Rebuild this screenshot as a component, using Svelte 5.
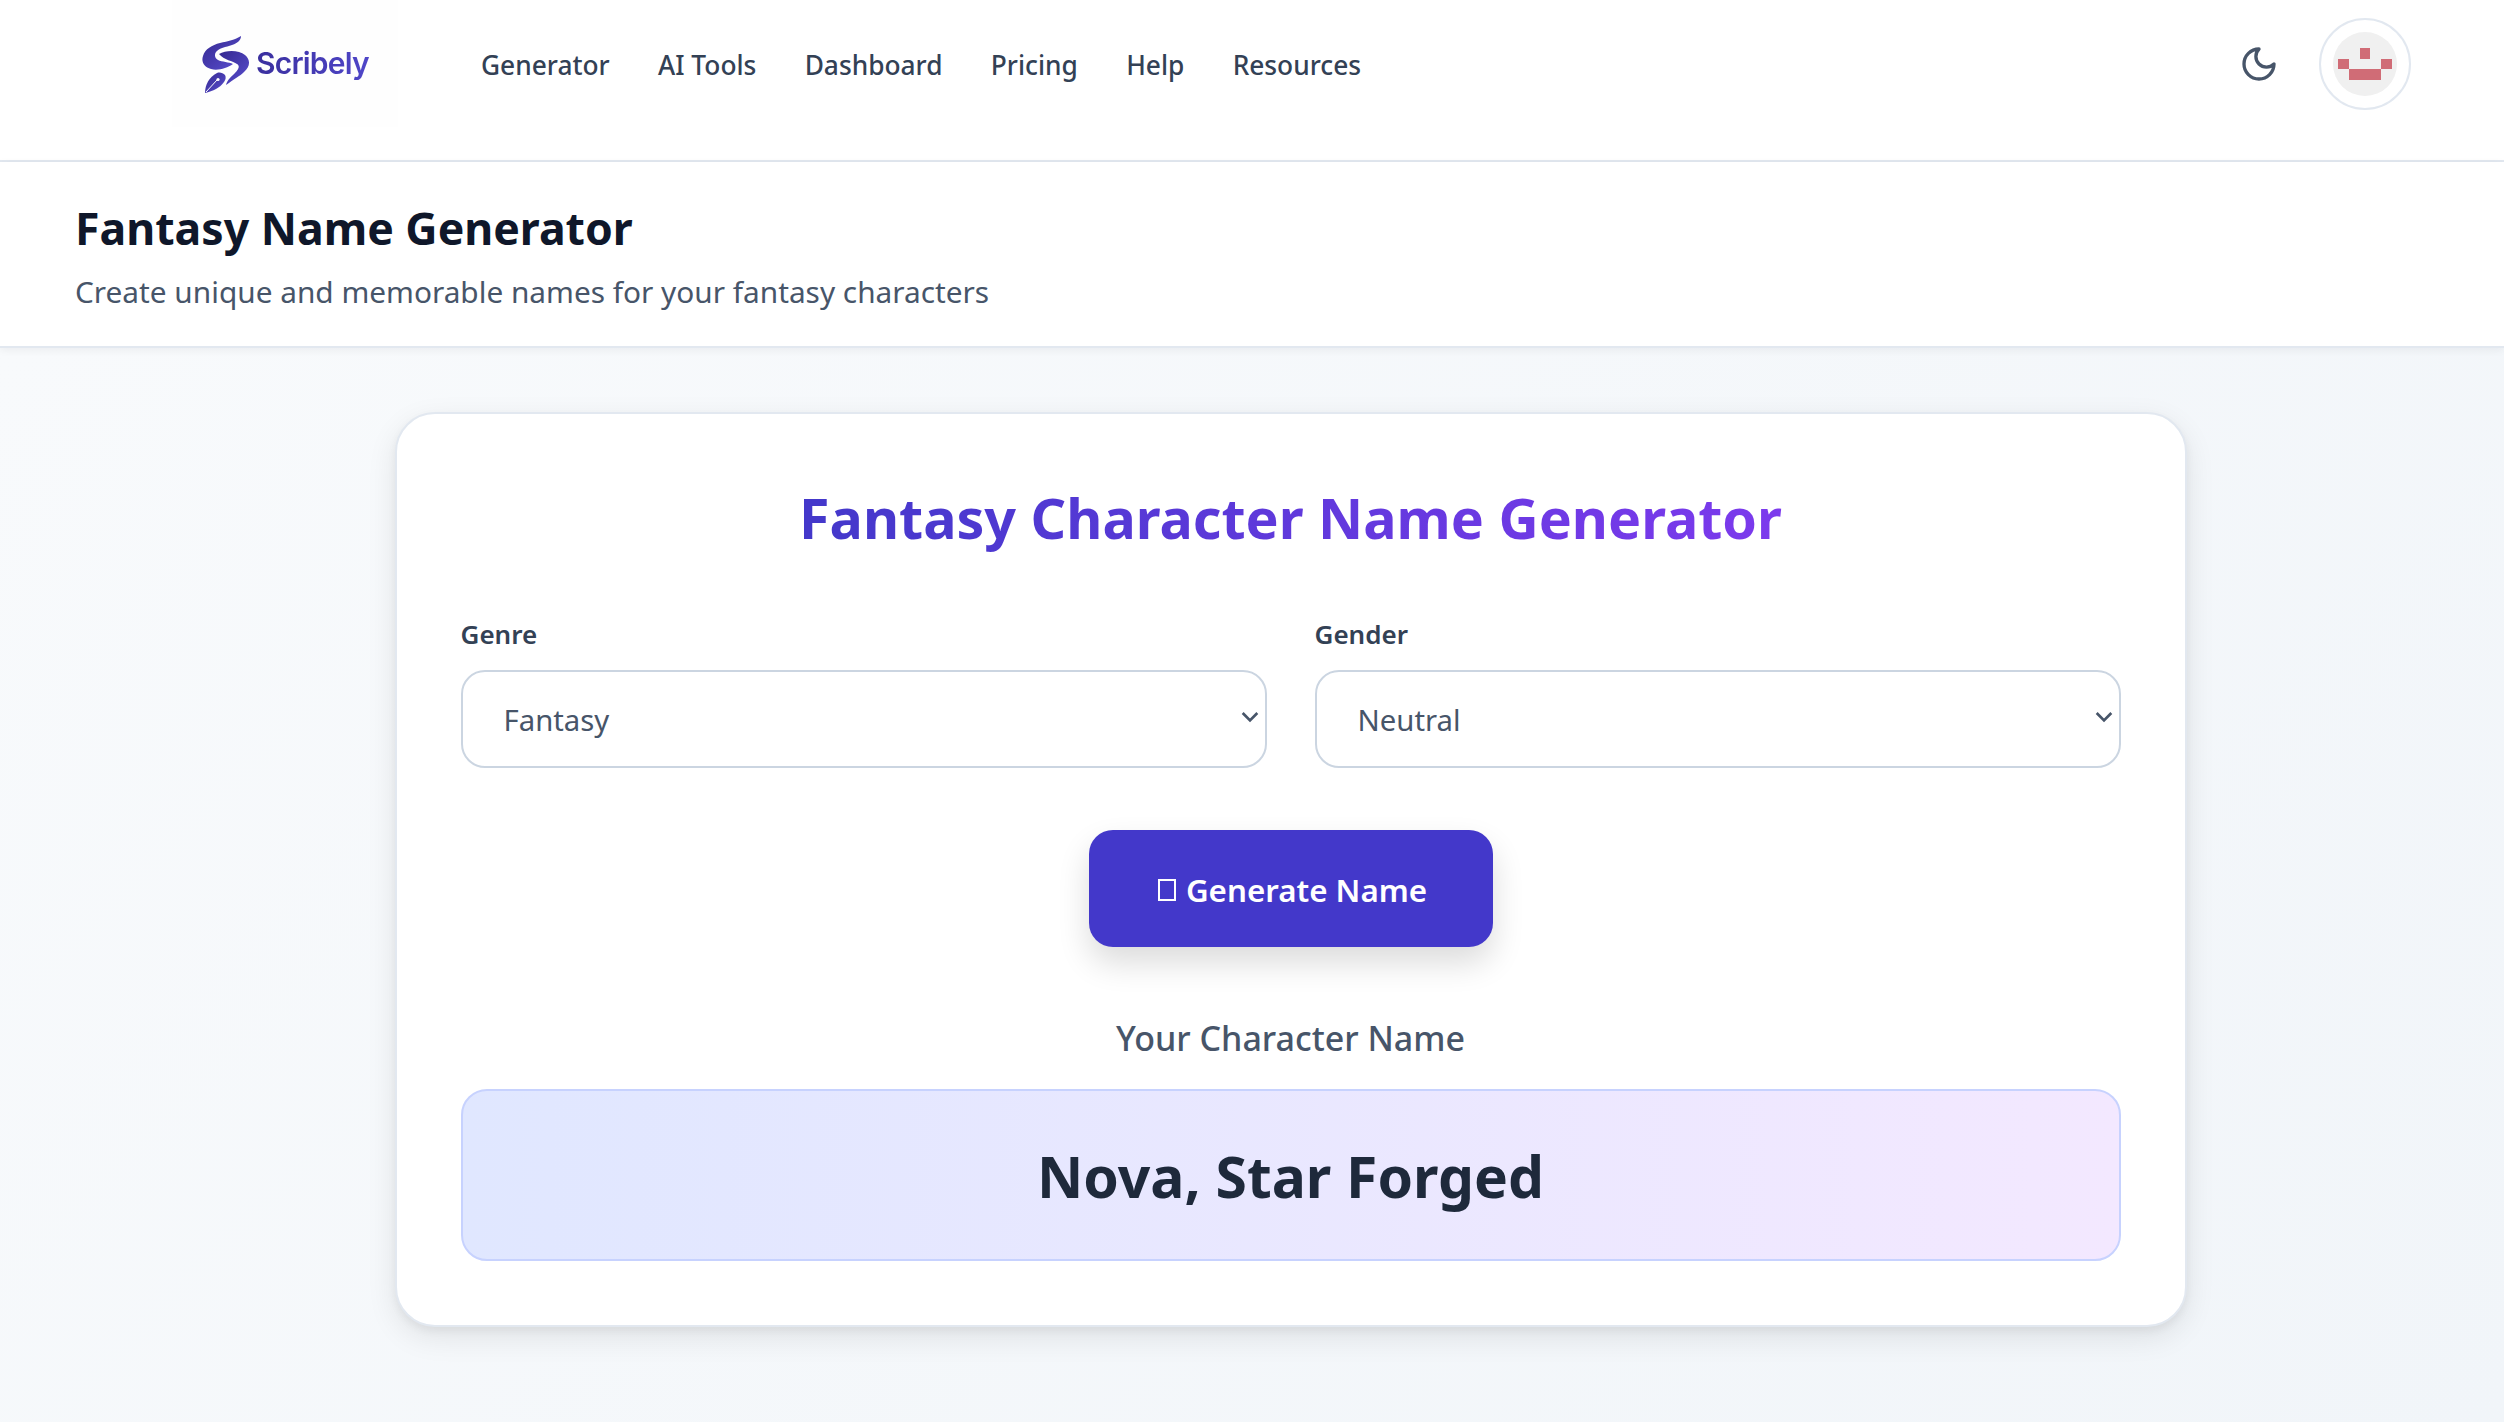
<script>
  const genres = ['Fantasy', 'Sci-Fi', 'Historical'];
  const genders = ['Neutral', 'Male', 'Female'];
  const navItems = ['Generator', 'AI Tools', 'Dashboard', 'Pricing', 'Help', 'Resources'];
  const pixels = [[5, 3, 2, 2], [1, 5, 2, 2], [9, 5, 2, 2], [3, 7, 6, 2]];
</script>

<header class="topbar">
  <div class="logo">
    <svg class="logo-mark" viewBox="0 0 48 58" aria-hidden="true">
      <defs>
        <linearGradient id="lg" x1="0" y1="0" x2="1" y2="1">
          <stop offset="0" stop-color="#34288f" />
          <stop offset="1" stop-color="#5a4fd0" />
        </linearGradient>
      </defs>
      <path fill="url(#lg)" d="M39 1 C39 5 36 8 30 10 C24 12 17 13 14 17 C12 20 13 23 16 25 C20 27 27 27 31 29 C25 33 16 36 9 34 C2 32 -1 27 1 21 C3 14 10 10 18 8 C26 6 33 5 39 1 Z" />
      <path fill="url(#lg)" d="M17 19 C24 15 37 15 43 20 C49 25 48 32 42 37 C38 41 32 44 24 50 C25 45 30 41 33 38 C37 34 38 31 35 29 C31 26 22 25 17 19 Z" />
      <path fill="url(#lg)" d="M3 58 C3 50 7 42 15 38 C18 37 21 38 23 40 C24 42 24 44 22 47 C18 53 11 56 3 58 Z" />
      <path stroke="#fff" stroke-width="1" fill="none" d="M4 57 L15 45" />
      <circle cx="16" cy="44.500" r="1.600" fill="#fff" />
    </svg>
    <span class="logo-text">Scribely</span>
  </div>

  <nav class="nav">
    {#each navItems as item}
      <a href="#top" class="nav-link">{item}</a>
    {/each}
  </nav>

  <div class="actions">
    <button class="theme" aria-label="Toggle theme">
      <svg viewBox="0 0 24 24" class="moon" aria-hidden="true">
        <path d="M12 3a6 6 0 0 0 9 9 9 9 0 1 1-9-9Z" />
      </svg>
    </button>
    <div class="avatar">
      <svg viewBox="0 0 12 12" class="identicon" aria-hidden="true" shape-rendering="crispEdges">
        <rect width="12" height="12" fill="#f0f0f0" />
        {#each pixels as p}
          <rect x={p[0]} y={p[1]} width={p[2]} height={p[3]} fill="#d06c76" />
        {/each}
      </svg>
    </div>
  </div>
</header>

<section class="pagehead">
  <h1>Fantasy Name Generator</h1>
  <p>Create unique and memorable names for your fantasy characters</p>
</section>

<main class="main">
  <div class="card">
    <h2>Fantasy Character Name Generator</h2>

    <div class="fields">
      <label class="field">
        <span class="field-label">Genre</span>
        <span class="select-wrap">
          <select>
            {#each genres as g}<option>{g}</option>{/each}
          </select>
          <svg class="chev" viewBox="0 0 16 10" aria-hidden="true"><path d="M1.5 1.5 8 8l6.5-6.5" /></svg>
        </span>
      </label>
      <label class="field">
        <span class="field-label">Gender</span>
        <span class="select-wrap">
          <select>
            {#each genders as g}<option>{g}</option>{/each}
          </select>
          <svg class="chev" viewBox="0 0 16 10" aria-hidden="true"><path d="M1.5 1.5 8 8l6.5-6.5" /></svg>
        </span>
      </label>
    </div>

    <div class="btn-row">
      <button class="generate"><span class="tofu"></span>Generate Name</button>
    </div>

    <h3>Your Character Name</h3>
    <div class="result">Nova, Star Forged</div>
  </div>
</main>

<style>
  :global(body) {
    margin: 0;
    background: #f8fafc;
    font-family: "Noto Sans", "Open Sans", sans-serif;
    color: #0f172a;
  }

  .topbar {
    display: flex;
    align-items: center;
    height: 130px;
    background: #fff;
    border-bottom: 2px solid #e2e8f0;
    padding: 0 93px 30px 172px;
  }

  .logo {
    align-self: flex-start;
    width: 226px;
    height: 127px;
    background: #fefefe;
    display: flex;
    align-items: center;
    gap: 6px;
    padding-left: 30px;
    box-sizing: border-box;
    flex: none;
  }

  .logo-mark {
    width: 48px;
    height: 58px;
    flex: none;
  }

  .logo-text {
    font-family: Inter, sans-serif;
    font-weight: 600;
    font-size: 30px;
    letter-spacing: -0.8px;
    background: linear-gradient(90deg, #3a2f9e, #4f46c8);
    -webkit-background-clip: text;
    background-clip: text;
    color: transparent;
    margin-top: -2px;
  }

  .nav {
    display: flex;
    gap: 48.300px;
    margin-left: 83px;
    flex: 1;
  }

  .nav-link {
    font-size: 26.300px;
    font-weight: 500;
    color: #334155;
    text-decoration: none;
  }

  .actions {
    display: flex;
    align-items: center;
    gap: 40px;
  }

  .theme {
    background: none;
    border: 0;
    padding: 0;
    display: flex;
    margin-top: -2px;
  }

  .moon {
    width: 40px;
    height: 40px;
    fill: none;
    stroke: #475569;
    stroke-width: 2;
    stroke-linejoin: round;
    stroke-linecap: round;
  }

  .avatar {
    width: 92px;
    height: 92px;
    border: 2px solid #e2e8f0;
    border-radius: 50%;
    box-sizing: border-box;
    display: flex;
    align-items: center;
    justify-content: center;
    margin-top: -2px;
  }

  .identicon {
    width: 64px;
    height: 64px;
    border-radius: 50%;
  }

  .pagehead {
    background: #fff;
    padding: 34px 75px 0;
    height: 186px;
    box-sizing: border-box;
    border-bottom: 2px solid #e2e8f0;
    box-shadow: 0 2px 8px rgba(15, 23, 42, 0.06);
    position: relative;
  }

  h1 {
    margin: 0;
    font-size: 44.600px;
    line-height: 64px;
    font-weight: 700;
    color: #0f172a;
  }

  .pagehead p {
    margin: 10px 0 0;
    font-size: 29.800px;
    line-height: 44px;
    color: #475569;
  }

  .main {
    background: linear-gradient(135deg, #f8fafc, #f1f5f9);
    padding: 64px 0 95px 77px;
    display: flex;
    justify-content: center;
  }

  .card {
    width: 1792px;
    height: 915px;
    box-sizing: border-box;
    background: #fff;
    border: 2px solid #e2e8f0;
    border-radius: 40px;
    padding: 64px;
    box-shadow: 0 10px 30px rgba(0, 0, 0, 0.09), 0 4px 8px rgba(0, 0, 0, 0.05);
    display: flex;
    flex-direction: column;
  }

  h2 {
    margin: 0;
    align-self: center;
    font-size: 55.600px;
    line-height: 80px;
    font-weight: 700;
    background: linear-gradient(90deg, #4338ca, #7c3aed);
    -webkit-background-clip: text;
    background-clip: text;
    color: transparent;
  }

  .fields {
    display: grid;
    grid-template-columns: 1fr 1fr;
    gap: 48px;
    margin-top: 58px;
  }

  .field {
    display: flex;
    flex-direction: column;
    gap: 18px;
  }

  .field-label {
    font-size: 26px;
    line-height: 36px;
    font-weight: 600;
    color: #334155;
  }

  .select-wrap {
    position: relative;
    display: block;
  }

  select {
    appearance: none;
    width: 100%;
    height: 98px;
    box-sizing: border-box;
    border: 2px solid #cbd5e1;
    border-radius: 24px;
    background: #fff;
    padding: 2px 41px 0;
    font-family: inherit;
    font-size: 29.300px;
    color: #475569;
  }

  .chev {
    position: absolute;
    right: 8px;
    top: 41px;
    width: 18px;
    height: 12px;
    fill: none;
    stroke: #475569;
    stroke-width: 2.400;
    pointer-events: none;
  }

  .btn-row {
    display: flex;
    justify-content: center;
    margin-top: 62px;
  }

  .generate {
    width: 404px;
    height: 117px;
    border: 0;
    border-radius: 24px;
    background: #4338ca;
    color: #fff;
    font-family: inherit;
    font-size: 31.300px;
    font-weight: 600;
    padding: 2px 0 0 4px;
    box-shadow: 0 16px 32px rgba(0, 0, 0, 0.14);
    display: flex;
    align-items: center;
    justify-content: center;
  }

  .tofu {
    display: inline-block;
    width: 18px;
    height: 22px;
    box-sizing: border-box;
    border: 2px solid #fff;
    margin-right: 10px;
  }

  h3 {
    margin: 67px 0 0;
    text-align: center;
    font-size: 34px;
    line-height: 48px;
    font-weight: 500;
    color: #475569;
  }

  .result {
    margin-top: 27px;
    height: 172px;
    box-sizing: border-box;
    border: 2px solid #c7d2fe;
    border-radius: 26px;
    padding-top: 2px;
    background: linear-gradient(90deg, #e0e7ff, #f3e8ff);
    display: flex;
    align-items: center;
    justify-content: center;
    font-size: 57px;
    font-weight: 700;
    color: #1e293b;
  }
</style>
